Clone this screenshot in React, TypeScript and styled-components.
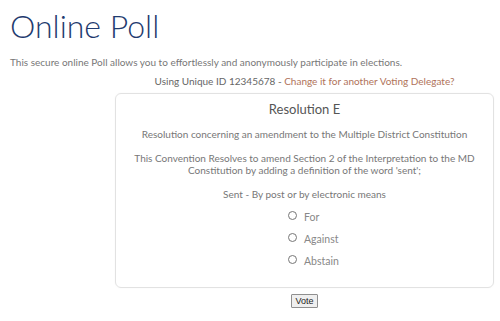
import styled, { createGlobalStyle } from "styled-components";

// #region ##################################################################################### STYLES
const GlobalStyle = createGlobalStyle`
  html, body {
    margin: 0;
    padding: 0;
    background: #ffffff;
  }
  body {
    font-family: "Lato", "Open Sans", sans-serif;
    color: #777777;
  }
`;

const Page = styled.div`
  padding: 0 6px 0 10px;
  width: 500px;
  box-sizing: border-box;
`;

const Title = styled.h1`
  margin: 0;
  padding-top: 6px;
  font-size: 32px;
  line-height: 40px;
  font-weight: 300;
  color: #1f3b6f;
`;

const Intro = styled.p`
  margin: 9px 0 0;
  font-size: 10px;
  line-height: 14px;
`;

const Column = styled.div`
  margin-left: 105px;
  display: flex;
  flex-direction: column;
  align-items: center;
`;

const IdLine = styled.p`
  margin: 5px 0 0;
  font-size: 10px;
  line-height: 14px;
  color: #666666;
`;

const ChangeLink = styled.a`
  color: #b0735a;
  text-decoration: none;
`;

const Card = styled.div`
  align-self: stretch;
  margin-top: 5px;
  border: 1px solid #e2e2e2;
  border-radius: 6px;
  padding: 6px 12px 19px;
  text-align: center;
  box-shadow: 0 0 2px rgba(0, 0, 0, 0.04);
`;

const CardTitle = styled.h2`
  margin: 0;
  font-size: 13px;
  line-height: 18px;
  font-weight: 400;
  color: #555555;
`;

const CardText = styled.p<{ $gap?: number }>`
  margin: ${(p) => p.$gap ?? 12}px 0 0;
  font-size: 10px;
  line-height: 12px;
  color: #777777;
`;

const OptionList = styled.div`
  margin-top: 11px;
  display: flex;
  flex-direction: column;
  gap: 9px;
  padding-left: 160px;
`;

const Option = styled.label`
  display: flex;
  align-items: center;
  gap: 7px;
  font-size: 10.5px;
  line-height: 13px;
  color: #888888;
`;

const Radio = styled.input`
  margin: 0;
  width: 9px;
  height: 9px;
  position: relative;
  top: -2px;
`;

const VoteButton = styled.button`
  margin-top: 6px;
  padding: 0 3px;
  height: 14px;
  font-family: "Liberation Sans", Arial, sans-serif;
  font-size: 9px;
  color: #222222;
  background: #efefef;
  border: 1px solid #8f8f8f;
  border-radius: 1px;
`;
// #endregion

// #region ##################################################################################### COMPONENT
const options = ["For", "Against", "Abstain"];

const App = () => {
  return (
    <Page>
      <GlobalStyle />
      <Title>Online Poll</Title>
      <Intro>
        This secure online Poll allows you to effortlessly and anonymously participate in elections.
      </Intro>

      <Column>
        <IdLine>
          Using Unique ID 12345678 - <ChangeLink href="#">Change it for another Voting Delegate?</ChangeLink>
        </IdLine>

        <Card>
          <CardTitle>Resolution E</CardTitle>
          <CardText $gap={10}>Resolution concerning an amendment to the Multiple District Constitution</CardText>
          <CardText>
            This Convention Resolves to amend Section 2 of the Interpretation to the MD
            <br />
            Constitution by adding a definition of the word 'sent';
          </CardText>
          <CardText>Sent - By post or by electronic means</CardText>

          <OptionList>
            {options.map((o) => (
              <Option key={o}>
                <Radio type="radio" name="vote" value={o} />
                {o}
              </Option>
            ))}
          </OptionList>
        </Card>

        <VoteButton>Vote</VoteButton>
      </Column>
    </Page>
  );
};
// #endregion

// #region ##################################################################################### EXPORTS
export default App;
// #endregion
